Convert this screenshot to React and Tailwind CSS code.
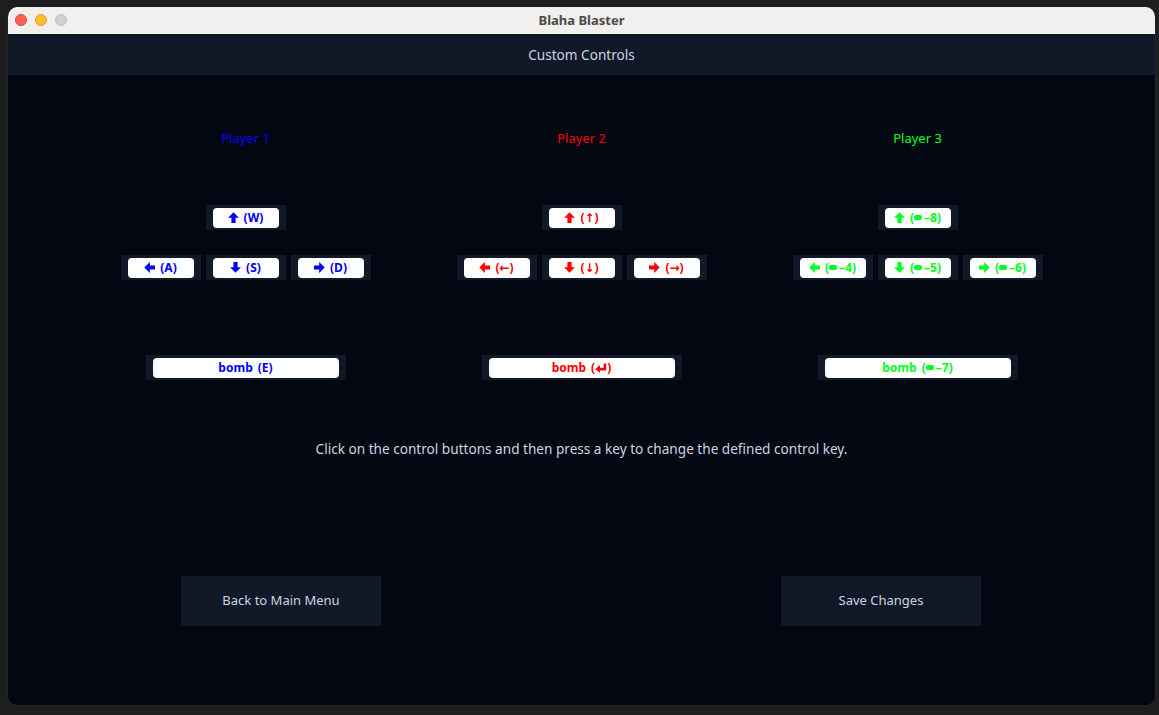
import React from "react";

const players = [
  {
    name: "Player 1",
    color: "text-[#0000ff]",
    up: "W",
    left: "A",
    down: "S",
    right: "D",
    bomb: "E",
  },
  {
    name: "Player 2",
    color: "text-[#ff0000]",
    up: "↑",
    left: "←",
    down: "↓",
    right: "→",
    bomb: "enter",
  },
  {
    name: "Player 3",
    color: "text-[#00ff22]",
    up: "pad8",
    left: "pad4",
    down: "pad5",
    right: "pad6",
    bomb: "pad7",
  },
];

const rotations = {
  up: "rotate-0",
  right: "rotate-90",
  down: "rotate-180",
  left: "-rotate-90",
};

const HeavyArrow = ({ dir }) => (
  <svg viewBox="0 0 10 10" className={`h-[11px] w-[11px] ${rotations[dir]}`} fill="currentColor">
    <path d="M5 0.3 L9.9 5.3 L6.9 5.3 L6.9 10 L3.1 10 L3.1 5.3 L0.1 5.3 Z" />
  </svg>
);

const EnterGlyph = () => (
  <svg viewBox="0 0 12 10" className="h-[10px] w-[12px]" fill="currentColor">
    <path d="M8.6 0.5 H11.2 V7.4 H5 V9.8 L0.2 6 L5 2.2 V4.8 H8.6 Z" />
  </svg>
);

const KeyLabel = ({ value }) => {
  if (value === "enter") return <EnterGlyph />;
  if (value.startsWith("pad")) {
    return (
      <span className="inline-flex items-center">
        <span className="inline-block h-[5px] w-[8px] rounded-[2px] bg-current" />
        <span className="ml-[2px]">–{value.slice(3)}</span>
      </span>
    );
  }
  return <span>{value}</span>;
};

const KeyButton = ({ color, dir, value, wide }) => (
  <div className={`flex h-[25px] ${wide ? "w-[200px]" : "w-[80px]"} items-center justify-center bg-[#111827] px-[7px]`}>
    <div
      className={`flex h-[20px] w-full items-center justify-center gap-[5px] rounded-[4px] bg-white text-[12px] font-bold ${color}`}
    >
      {wide ? <span>bomb</span> : <HeavyArrow dir={dir} />}
      <span className="inline-flex items-center">
        (<KeyLabel value={value} />)
      </span>
    </div>
  </div>
);

const PlayerColumn = ({ player }) => (
  <div className="flex flex-col items-center">
    <p className={`h-[18px] text-[13px] leading-[18px] ${player.color}`}>{player.name}</p>
    <div className="mt-[58px]">
      <KeyButton color={player.color} dir="up" value={player.up} />
    </div>
    <div className="mt-[25px] flex gap-[5px]">
      <KeyButton color={player.color} dir="left" value={player.left} />
      <KeyButton color={player.color} dir="down" value={player.down} />
      <KeyButton color={player.color} dir="right" value={player.right} />
    </div>
    <div className="mt-[75px]">
      <KeyButton color={player.color} wide value={player.bomb} />
    </div>
  </div>
);

export default function App() {
  return (
    <div
      className="h-[715px] w-[1159px] overflow-hidden bg-[#1e1e1e] pt-[7px] pl-[7px]"
      style={{ fontFamily: '"Noto Sans", "DejaVu Sans", sans-serif' }}
    >
      <div className="flex h-[699px] w-[1149px] flex-col overflow-hidden rounded-[10px] border border-t-0 border-[#1f2433] bg-[#030712]">
        <div className="relative flex h-[28px] items-center justify-center border-b border-[#111] bg-[#f1f0ee]">
          <div className="absolute left-[7px] top-[7px] flex gap-[8px]">
            <span className="h-[12px] w-[12px] rounded-full border border-[#e0443e] bg-[#fe5f57]" />
            <span className="h-[12px] w-[12px] rounded-full border border-[#dea123] bg-[#febc2e]" />
            <span className="h-[12px] w-[12px] rounded-full border border-[#bfbfbf] bg-[#d1d1d1]" />
          </div>
          <span className="text-[13px] font-bold text-[#4b4b4b]">Blaha Blaster</span>
        </div>

        <div className="flex h-[40px] items-center justify-center bg-[#111827] text-[13.6px] text-[#cbd5e1]">
          Custom Controls
        </div>

        <div className="flex flex-1 flex-col items-center">
          <div className="mt-[54px] grid w-[1008px] grid-cols-3">
            {players.map((player) => (
              <PlayerColumn key={player.name} player={player} />
            ))}
          </div>

          <p className="mt-[60px] h-[18px] text-[13.6px] leading-[18px] text-[#cbd5e1]">
            Click on the control buttons and then press a key to change the defined control key.
          </p>

          <div className="mt-[118px] flex w-full justify-between pl-[173px] pr-[174px]">
            <button className="h-[50px] w-[200px] bg-[#111827] text-[13px] text-[#cbd5e1]">Back to Main Menu</button>
            <button className="h-[50px] w-[200px] bg-[#111827] text-[13px] text-[#cbd5e1]">Save Changes</button>
          </div>
        </div>
      </div>
    </div>
  );
}
